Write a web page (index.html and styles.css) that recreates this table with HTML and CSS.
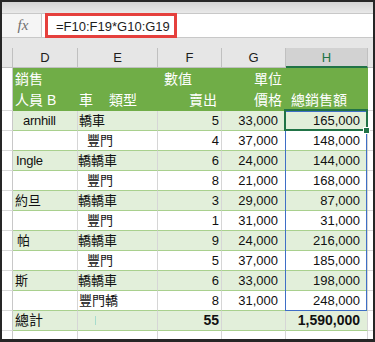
FILE: index.html
```html
<!DOCTYPE html>
<html lang="zh-Hant">
<head>
<meta charset="utf-8">
<link rel="stylesheet" href="styles.css">
</head>
<body>
<div class="frame">
  <div class="topstrip"></div>
  <div class="fbar">
    <div class="fx">fx</div>
    <div class="finput"><div class="formula">=F10:F19*G10:G19</div></div>
  </div>
  <div class="gap"></div>
  <div class="grid colhdr">
    <div></div><div>D</div><div>E</div><div>F</div><div>G</div><div class="sel">H</div><div class="last"></div>
  </div>
  <div class="grid hdr hdr1">
    <div class="rh"></div>
    <div class="g pl2">銷售</div>
    <div class="g"></div>
    <div class="g pl6">數值</div>
    <div class="g right pr4">單位</div>
    <div class="g"></div>
    <div class="ex"></div>
  </div>
  <div class="grid hdr hdr2">
    <div class="rh line"></div>
    <div class="g pl2">人員 B</div>
    <div class="g pl1">車<span class="sp">類型</span></div>
    <div class="g right pr5">賣出</div>
    <div class="g right pr4">價格</div>
    <div class="g pl5">總銷售額</div>
    <div class="ex line"></div>
  </div>
  <div class="grid row band">
    <div class="rh"></div><div class="c lat pl10">arnhill</div><div class="c pl1">轎車</div><div class="c num f">5</div><div class="c num gc">33,000</div><div class="c num h">165,000</div><div class="ex"></div>
  </div>
  <div class="grid row">
    <div class="rh"></div><div class="c"></div><div class="c pl9"><span class="wb">豐門</span></div><div class="c num f">4</div><div class="c num gc">37,000</div><div class="c num h">148,000</div><div class="ex"></div>
  </div>
  <div class="grid row band">
    <div class="rh"></div><div class="c lat pl3">Ingle</div><div class="c">轎轎車</div><div class="c num f">6</div><div class="c num gc">24,000</div><div class="c num h">144,000</div><div class="ex"></div>
  </div>
  <div class="grid row">
    <div class="rh"></div><div class="c"></div><div class="c pl9"><span class="wb">豐門</span></div><div class="c num f">8</div><div class="c num gc">21,000</div><div class="c num h">168,000</div><div class="ex"></div>
  </div>
  <div class="grid row band">
    <div class="rh"></div><div class="c pl2">約旦</div><div class="c">轎轎車</div><div class="c num f">3</div><div class="c num gc">29,000</div><div class="c num h">87,000</div><div class="ex"></div>
  </div>
  <div class="grid row">
    <div class="rh"></div><div class="c"></div><div class="c pl9"><span class="wb">豐門</span></div><div class="c num f">1</div><div class="c num gc">31,000</div><div class="c num h">31,000</div><div class="ex"></div>
  </div>
  <div class="grid row band">
    <div class="rh"></div><div class="c pl4">帕</div><div class="c">轎轎車</div><div class="c num f">9</div><div class="c num gc">24,000</div><div class="c num h">216,000</div><div class="ex"></div>
  </div>
  <div class="grid row">
    <div class="rh"></div><div class="c"></div><div class="c pl9"><span class="wb">豐門</span></div><div class="c num f">5</div><div class="c num gc">37,000</div><div class="c num h">185,000</div><div class="ex"></div>
  </div>
  <div class="grid row band">
    <div class="rh"></div><div class="c pl2">斯</div><div class="c">轎轎車</div><div class="c num f">6</div><div class="c num gc">33,000</div><div class="c num h">198,000</div><div class="ex"></div>
  </div>
  <div class="grid row">
    <div class="rh"></div><div class="c"></div><div class="c pl1"><span class="wb">豐門轎</span></div><div class="c num f">8</div><div class="c num gc">31,000</div><div class="c num h">248,000</div><div class="ex"></div>
  </div>
  <div class="grid row band total">
    <div class="rh"></div><div class="c pl2 big">總計</div><div class="c"><span class="tick"></span></div><div class="c num f b">55</div><div class="c"></div><div class="c num h b">1,590,000</div><div class="ex"></div>
  </div>
  <div class="grid tail">
    <div class="rh"></div><div class="c"></div><div class="c"></div><div class="c"></div><div class="c"></div><div class="c"></div><div class="ex"></div>
  </div>

  <div class="range"></div>
  <div class="active"></div>
  <div class="handle"></div>
</div>
</body>
</html>
```

FILE: styles.css
```css
* { box-sizing: border-box; margin: 0; padding: 0; }
body {
  margin: 0;
  background: #fff;
  font-family: "Liberation Sans", "Noto Sans CJK TC", sans-serif;
  color: #111;
}
.frame {
  position: relative;
  width: 375px;
  height: 342px;
  border: 2px solid #262626;
  border-bottom-width: 3px;
  overflow: hidden;
  background: #fff;
}
.topstrip { height: 11px; background: linear-gradient(#d3d3d3, #e9e9e9); }
.fbar { height: 25px; display: flex; background: #e8e8e8; }
.fx {
  width: 40px;
  background: #f5f5f5;
  border-top: 1px solid #c8c8c8;
  border-bottom: 1px solid #c8c8c8;
  border-right: 1px solid #c8c8c8;
  display: flex;
  align-items: center;
  justify-content: center;
  padding-left: 3px;
  font: italic 15px "Liberation Serif", serif;
  color: #707070;
}
.finput {
  flex: 1;
  background: #fff;
  box-shadow: inset 0 1px #c8c8c8, inset 0 -1px #c8c8c8;
  padding-left: 3px;
}
.formula {
  width: 132px;
  height: 25px;
  border: 3px solid #e5403d;
  display: flex;
  align-items: center;
  padding-left: 8px;
  padding-top: 2px;
  font-size: 13px;
  color: #1d1d1d;
  white-space: nowrap;
}
.gap { height: 10px; background: #e6e6e6; }
.grid { display: grid; grid-template-columns: 11px 65px 80px 64px 64px 82px 5px; }
.colhdr { height: 20px; background: #e6e6e6; }
.colhdr > div {
  border-right: 1px solid #c0c0c0;
  border-bottom: 1px solid #c0c0c0;
  display: flex;
  align-items: center;
  justify-content: center;
  font-size: 13px;
  color: #1d1d1d;
}
.colhdr > .last { border-right: 0; }
.colhdr > .sel { background: #d2d2d2; color: #217346; border-bottom: 2px solid #217346; }

.hdr1 { height: 21px; }
.hdr2 { height: 22px; }
.rh { background: #fff; border-right: 1px solid #c8c8c8; border-bottom: 1px solid #d9d9d9; }
.hdr .rh, .hdr .ex { border-bottom: 0; }
.hdr .rh.line, .hdr .ex.line { border-bottom: 1px solid #d9d9d9; }
.ex { background: #fff; border-bottom: 1px solid #d9d9d9; }
.g {
  background: #70ad47;
  color: #fff;
  font-size: 14px;
  display: flex;
  align-items: center;
  white-space: nowrap;
  line-height: 20px;
}
.hdr1 .g { padding-top: 1px; }
.sp { margin-left: 16px; }

.row { height: 20px; }
.c {
  border-right: 1px solid #d6d6d6;
  border-bottom: 1px solid #a9d08e;
  display: flex;
  align-items: center;
  font-size: 13px;
  line-height: 19px;
  white-space: nowrap;
  background: #fff;
}
.band .c { background: #e2efda; }
.num { justify-content: flex-end; }
.f { padding-right: 2px; }
.gc { padding-right: 7px; }
.h { padding-right: 7px; }
.b { font-weight: bold; font-size: 14px; }
.big { font-size: 14px; }
.lat { font-size: 13px; letter-spacing: -0.3px; }
.right { justify-content: flex-end; }
.pl1 { padding-left: 1px; }
.pl2 { padding-left: 2px; }
.pl3 { padding-left: 3px; }
.pl4 { padding-left: 4px; }
.pl5 { padding-left: 5px; }
.pl6 { padding-left: 6px; }
.pl9 { padding-left: 9px; }
.pl10 { padding-left: 10px; }
.pr4 { padding-right: 4px; }
.pr5 { padding-right: 5px; }
.wb { background: #fff; }
.tick { display: block; width: 1px; height: 9px; margin-left: 17px; background: #a6dccd; }

.tail { height: 8px; }
.tail .c { border-bottom: 0; }
.tail .rh, .tail .ex { border-bottom: 0; }

.range {
  position: absolute;
  left: 283px;
  top: 109px;
  width: 82px;
  height: 200px;
  border: 1px solid #3f6fc6;
}
.active {
  position: absolute;
  left: 282px;
  top: 107px;
  width: 84px;
  height: 22px;
  border: 2px solid #217346;
}
.handle {
  position: absolute;
  left: 361px;
  top: 125px;
  width: 7px;
  height: 7px;
  background: #217346;
  border: 1px solid #fff;
}
```
